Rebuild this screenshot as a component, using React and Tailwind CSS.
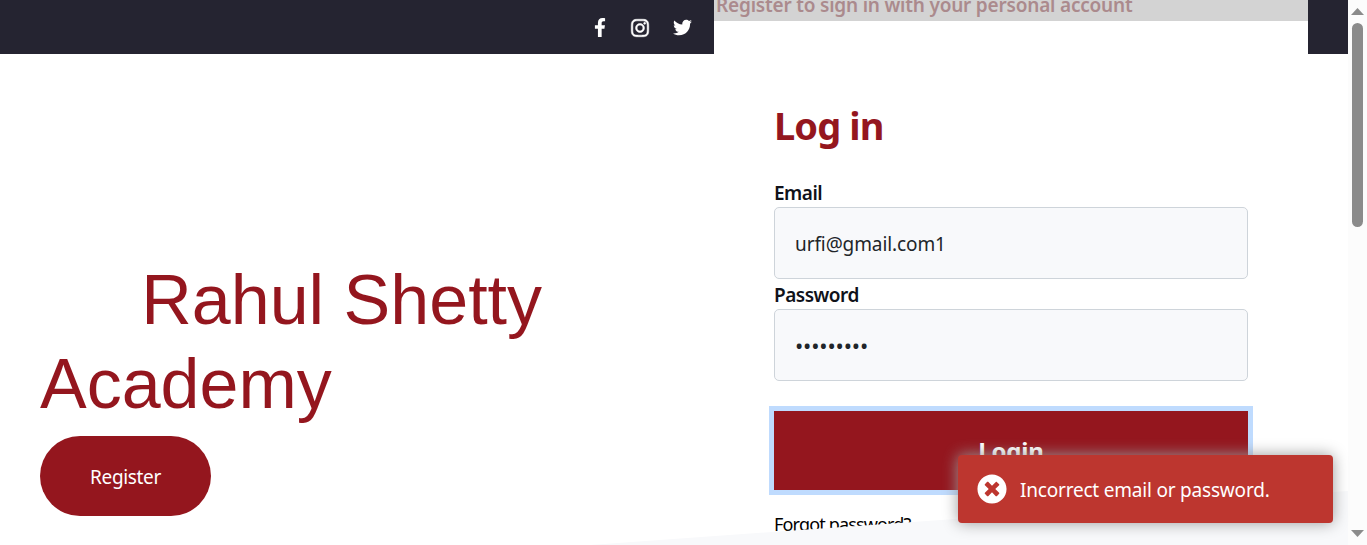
import { FaFacebookF, FaInstagram, FaTwitter, FaTimesCircle } from "react-icons/fa";

function SocialBar() {
  return (
    <div className="flex h-[54px] items-center justify-end bg-[#252431] pr-[22px] pt-px text-white">
      <FaFacebookF className="mr-[20px] h-[19px] w-[20px]" />
      <FaInstagram className="mr-[23px] h-[20px] w-[20px] stroke-white stroke-[14px]" />
      <FaTwitter className="h-[19px] w-[19px]" />
    </div>
  );
}

function Hero() {
  return (
    <section className="w-[714px] shrink-0">
      <SocialBar />
      <div className="pl-10 pt-[204px]">
        <h1 className="whitespace-pre font-['Liberation_Sans',Arial,sans-serif] text-[70px] leading-[84px] text-[#94161e]">
          <span className="pl-1">{"\u00a0\u00a0\u00a0\u00a0\u00a0Rahul Shetty"}</span>
          {"\nAcademy"}
        </h1>
        <button className="mt-[10px] flex h-20 w-[171px] items-center justify-center rounded-[40px] bg-[#94161e] pb-px pt-[3px] text-[19px] tracking-[-0.35px] text-white">
          Register
        </button>
      </div>
    </section>
  );
}

function Field({ label, type, children }) {
  return (
    <div className="pt-[3px]">
      <div className="h-[27px] text-[19px] font-semibold leading-[27px] tracking-[-0.5px] text-[#10121a]">{label}</div>
      <div
        className={
          type === "password"
            ? "flex h-[72px] items-center rounded-[5px] border border-[#ced4da] bg-[#f8f9fb] pl-[20px] text-[22px] tracking-[-0.15px] text-[#212529]"
            : "flex h-[72px] items-center rounded-[5px] border border-[#ced4da] bg-[#f8f9fb] pl-[20px] pt-[2px] text-[19px] tracking-[-0.1px] text-[#212529]"
        }
      >
        {children}
      </div>
    </div>
  );
}

function LoginPanel() {
  return (
    <section className="w-[594px] shrink-0 bg-white">
      <div className="h-[21px] overflow-hidden bg-[#d3d3d3] pl-[2px]">
        <p className="-mt-[9px] whitespace-nowrap text-[19px] font-semibold leading-[28px] tracking-[-0.2px] text-[#ab8a8d]">
          Register to sign in with your personal account
        </p>
      </div>
      <div className="px-[60px] pt-[80px]">
        <h2 className="h-[49px] text-[38px] font-bold leading-[48px] tracking-[-0.9px] text-[#94161e]">Log in</h2>
        <div className="pt-[27px]">
          <Field label="Email" type="text">urfi@gmail.com1</Field>
          <Field label="Password" type="password">•••••••••</Field>
        </div>
        <button className="mt-[30px] flex h-[79px] w-full items-center justify-center bg-[#94161e] pt-px text-[24px] font-bold tracking-[-0.2px] text-white ring-[5px] ring-[#bfdbfe]">
          Login
        </button>
        <a className="mt-[20px] block whitespace-nowrap text-[18px] leading-[28px] tracking-[-0.85px] text-black">Forgot password?</a>
      </div>
    </section>
  );
}

function Scrollbar() {
  return (
    <div className="flex h-full w-[19px] shrink-0 flex-col items-center bg-[#fcfcfc] pb-[8px] pt-[8px]">
      <svg className="h-[7px] w-[13px] shrink-0" viewBox="0 0 13 7">
        <path d="M6.5 0 13 7H0z" fill="#8b8b8b" />
      </svg>
      <div className="mt-[8px] h-[204px] w-[11px] shrink-0 rounded-full bg-[#8b8b8b]" />
      <svg className="mt-auto h-[7px] w-[13px] shrink-0" viewBox="0 0 13 7">
        <path d="M6.5 7 13 0H0z" fill="#8b8b8b" />
      </svg>
    </div>
  );
}

function Toast() {
  return (
    <div className="absolute bottom-[22px] right-[34px] flex h-[68px] w-[375px] items-center rounded-[4px] bg-[#bd362f] pl-[19px] text-[19px] text-white shadow-[0_0_15px_#999999]">
      <FaTimesCircle className="h-[30px] w-[30px]" />
      <span className="ml-[13px] mt-[2px] whitespace-nowrap tracking-[-0.2px]">Incorrect email or password.</span>
    </div>
  );
}

export default function App() {
  return (
    <main className="relative flex h-[545px] w-[1367px] overflow-hidden bg-white font-['Noto_Sans','Open_Sans',sans-serif]">
      <Hero />
      <LoginPanel />
      <div className="h-[54px] w-10 shrink-0 bg-[#252431]" />
      <Scrollbar />
      <svg className="absolute bottom-0 right-[19px] h-[54px] w-[758px]" viewBox="0 0 758 54" preserveAspectRatio="none">
        <path d="M0 54 758 0V54z" fill="#f8f9fb" />
      </svg>
      <Toast />
    </main>
  );
}
